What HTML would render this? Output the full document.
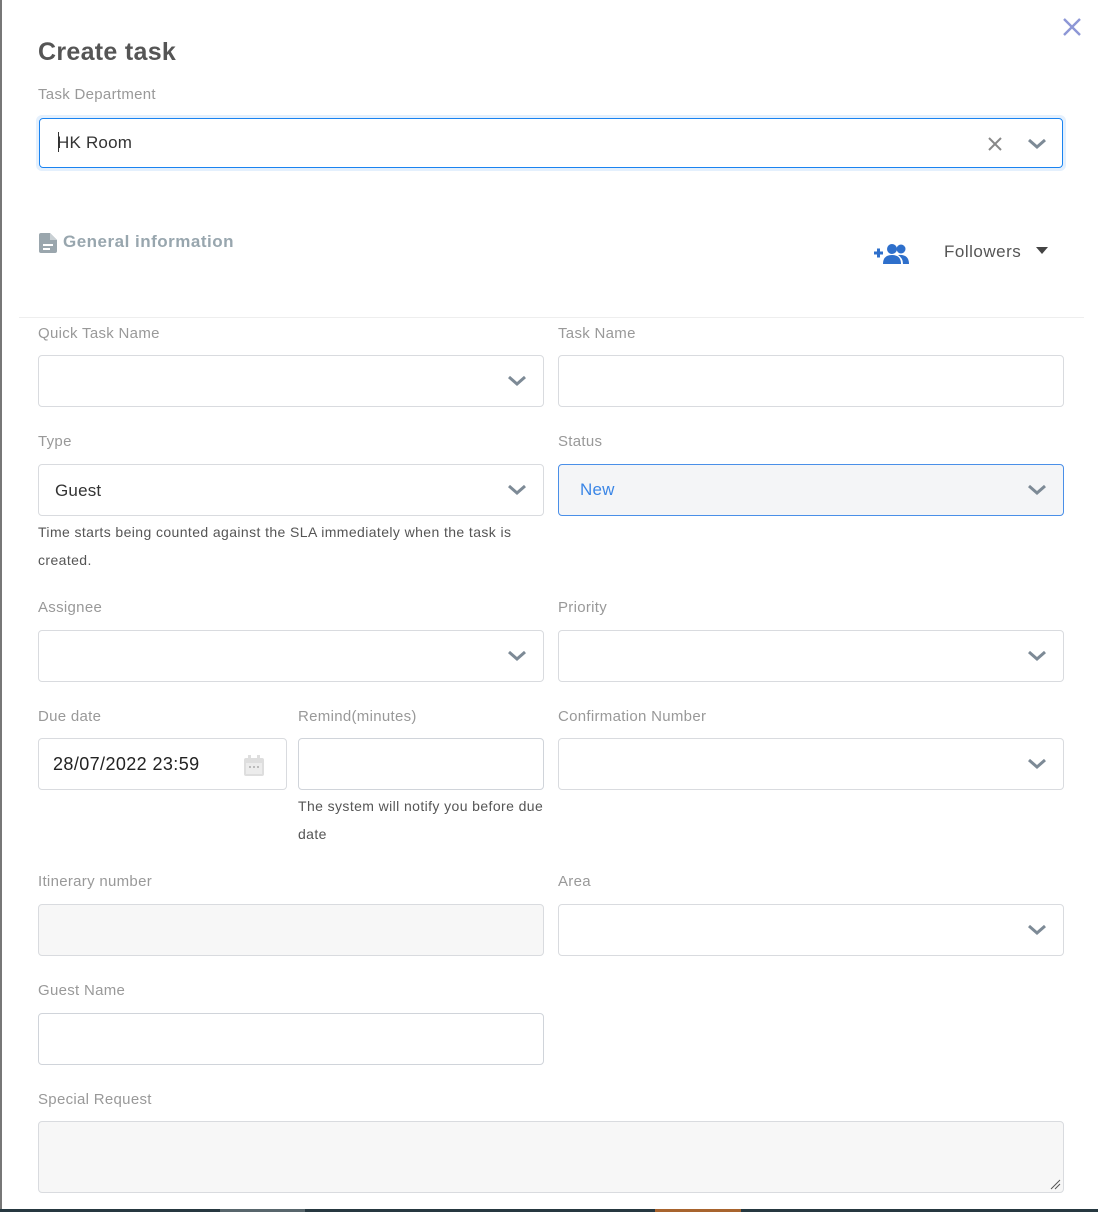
<!DOCTYPE html>
<html><head><meta charset="utf-8"><style>
*{box-sizing:border-box;margin:0;padding:0}
body{width:1098px;height:1212px;background:#fff;font-family:"Liberation Sans",sans-serif;position:relative;overflow:hidden}
.a{position:absolute}
.lbl{position:absolute;font-size:15px;color:#999;line-height:18px;letter-spacing:0.3px}
.in{position:absolute;height:52px;border:1px solid #d9dbdf;border-radius:4px;background:#fff}
.val{position:absolute;left:16px;top:16px;font-size:17px;color:#333;letter-spacing:0.2px}
.chev{position:absolute;right:16px;top:18px}
.help{position:absolute;font-size:14px;color:#555;line-height:28px;letter-spacing:0.4px}
</style></head><body>
<div class="a" style="left:0;top:0;width:2px;height:1212px;background:#777"></div>
<div class="a" style="left:0;top:1209px;width:1098px;height:3px;background:#263840"></div>
<div class="a" style="left:220px;top:1209px;width:85px;height:3px;background:#58666c"></div>
<div class="a" style="left:655px;top:1209px;width:86px;height:3px;background:#a8642e"></div>

<svg class="a" style="left:1062px;top:17px" width="20" height="20" viewBox="0 0 20 20"><path d="M2 2L18 18M18 2L2 18" stroke="#8d97d6" stroke-width="2.4"/></svg>
<div class="a" style="left:38px;top:38px;font-size:25px;font-weight:bold;color:#555;letter-spacing:0.3px">Create task</div>
<div class="lbl" style="left:38px;top:86px">Task Department</div>
<div class="in" style="left:36px;top:115px;width:1030px;height:56px;border:3px solid #e4f0fd;border-radius:6px;padding:0"><div style="position:absolute;left:0;top:0;right:0;bottom:0;border:1px solid #1a83f0;border-radius:4px"></div>
<div class="a" style="left:19px;top:14px;width:1px;height:20px;background:#333"></div>
<div class="val" style="left:18px;top:15px">HK Room</div>
<svg class="a" style="left:948px;top:18px" width="16" height="16"><path d="M2 2L14 14M14 2L2 14" stroke="#888" stroke-width="2"/></svg>
<svg class="a" style="left:988px;top:20px" width="20" height="12"><path d="M2 2L10 9L18 2" stroke="#7d8a96" stroke-width="3" fill="none"/></svg>
</div>

<svg class="a" style="left:39px;top:233px" width="18" height="20" viewBox="0 0 18 20"><path d="M2 0H11L18 7V18a2 2 0 0 1-2 2H2a2 2 0 0 1-2-2V2a2 2 0 0 1 2-2Z" fill="#9aa6ad"/><path d="M11 0V7H18" fill="#c9d0d4"/><rect x="4" y="11" width="10" height="2" fill="#fff"/><rect x="4" y="15" width="7" height="2" fill="#fff"/></svg>
<div class="a" style="left:63px;top:232px;font-size:17px;font-weight:bold;color:#98a6ae;letter-spacing:0.5px">General information</div>
<svg class="a" style="left:873px;top:243px" width="37" height="21" viewBox="0 0 37 21"><path d="M1 10H10M5.5 5.5V14.5" stroke="#2e6fcb" stroke-width="3"/><circle cx="19" cy="6" r="5" fill="#2e6fcb"/><circle cx="28" cy="6" r="4.5" fill="#2e6fcb"/><path d="M10 21Q10 12 19 12Q28 12 28 21Z" fill="#2e6fcb"/><path d="M25 12Q36 11 36 21H30Q30 15 25 12Z" fill="#2e6fcb"/></svg>
<div class="a" style="left:944px;top:242px;font-size:17px;color:#555;letter-spacing:0.5px">Followers</div>
<svg class="a" style="left:1036px;top:247px" width="12" height="7"><path d="M0 0H12L6 7Z" fill="#444"/></svg>
<div class="a" style="left:19px;top:317px;width:1065px;height:1px;background:#eee"></div>

<div class="lbl" style="left:38px;top:325px">Quick Task Name</div>
<div class="lbl" style="left:558px;top:325px">Task Name</div>
<div class="in" style="left:38px;top:355px;width:506px"><svg class="chev" width="20" height="14"><path d="M2 3L10 10L18 3" stroke="#7d8a96" stroke-width="3" fill="none"/></svg></div>
<div class="in" style="left:558px;top:355px;width:506px"></div>

<div class="lbl" style="left:38px;top:433px">Type</div>
<div class="lbl" style="left:558px;top:433px">Status</div>
<div class="in" style="left:38px;top:464px;width:506px"><div class="val">Guest</div><svg class="chev" width="20" height="14"><path d="M2 3L10 10L18 3" stroke="#7d8a96" stroke-width="3" fill="none"/></svg></div>
<div class="in" style="left:558px;top:464px;width:506px;background:#f4f5f7;border-color:#4a8fe8"><div class="val" style="left:21px;top:15px;color:#3b86e6">New</div><svg class="chev" width="20" height="14"><path d="M2 3L10 10L18 3" stroke="#7d8a96" stroke-width="3" fill="none"/></svg></div>
<div class="help" style="left:38px;top:518px">Time starts being counted against the SLA immediately when the task is<br>created.</div>

<div class="lbl" style="left:38px;top:599px">Assignee</div>
<div class="lbl" style="left:558px;top:599px">Priority</div>
<div class="in" style="left:38px;top:630px;width:506px"><svg class="chev" width="20" height="14"><path d="M2 3L10 10L18 3" stroke="#7d8a96" stroke-width="3" fill="none"/></svg></div>
<div class="in" style="left:558px;top:630px;width:506px"><svg class="chev" width="20" height="14"><path d="M2 3L10 10L18 3" stroke="#7d8a96" stroke-width="3" fill="none"/></svg></div>

<div class="lbl" style="left:38px;top:708px">Due date</div>
<div class="lbl" style="left:298px;top:708px">Remind(minutes)</div>
<div class="lbl" style="left:558px;top:708px">Confirmation Number</div>
<div class="in" style="left:38px;top:738px;width:249px"><div class="val" style="left:14px;top:15px;color:#222;font-size:18px;letter-spacing:0.4px">28/07/2022 23:59</div>
<svg class="a" style="left:205px;top:16px" width="20" height="21" viewBox="0 0 20 21"><rect x="0" y="3" width="20" height="18" rx="2" fill="#dedede"/><rect x="4" y="0" width="3" height="6" fill="#dedede"/><rect x="13" y="0" width="3" height="6" fill="#dedede"/><rect x="2" y="8" width="16" height="11" fill="#ececec"/><rect x="5" y="11" width="2" height="2" fill="#bbb"/><rect x="9" y="11" width="2" height="2" fill="#bbb"/><rect x="13" y="11" width="2" height="2" fill="#bbb"/></svg></div>
<div class="in" style="left:298px;top:738px;width:246px;border-color:#d0d4da"></div>
<div class="in" style="left:558px;top:738px;width:506px"><svg class="chev" width="20" height="14"><path d="M2 3L10 10L18 3" stroke="#7d8a96" stroke-width="3" fill="none"/></svg></div>
<div class="help" style="left:298px;top:792px">The system will notify you before due<br>date</div>

<div class="lbl" style="left:38px;top:873px">Itinerary number</div>
<div class="lbl" style="left:558px;top:873px">Area</div>
<div class="in" style="left:38px;top:904px;width:506px;background:#f7f7f7"></div>
<div class="in" style="left:558px;top:904px;width:506px"><svg class="chev" width="20" height="14"><path d="M2 3L10 10L18 3" stroke="#7d8a96" stroke-width="3" fill="none"/></svg></div>

<div class="lbl" style="left:38px;top:982px">Guest Name</div>
<div class="in" style="left:38px;top:1013px;width:506px;border-color:#d0d4da"></div>

<div class="lbl" style="left:38px;top:1091px">Special Request</div>
<div class="in" style="left:38px;top:1121px;width:1026px;height:72px;background:#f7f7f7"><svg class="a" style="right:2px;bottom:2px" width="12" height="12"><path d="M11 2L2 11M11 6L6 11" stroke="#555" stroke-width="1"/></svg></div>
</body></html>
